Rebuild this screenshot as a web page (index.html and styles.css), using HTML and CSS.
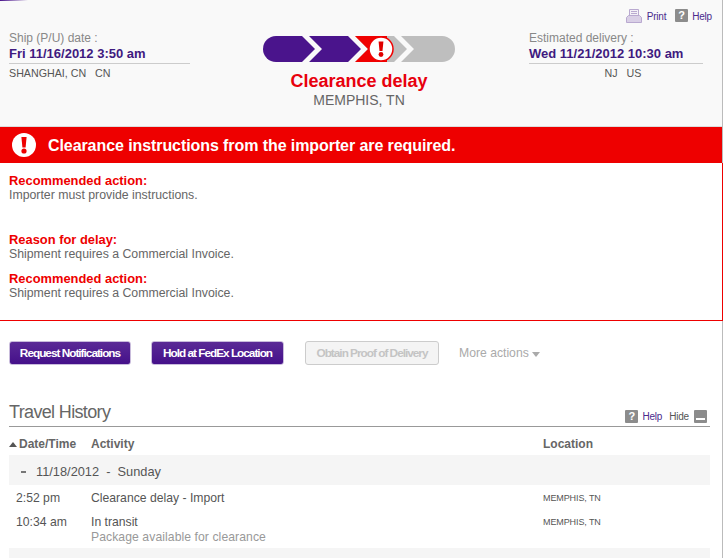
FILE: index.html
```html
<!DOCTYPE html>
<html>
<head>
<title>Track shipment</title>
<meta charset="UTF-8">
<link rel="stylesheet" href="styles.css">
</head>
<body>
<div class="page">

  <div class="summary">
    <div class="tools">
      <svg class="print_icon" width="16" height="14" viewBox="0 0 16 14">
        <path d="M3.5 .5h9v6h-9z" fill="#f3f0f7" stroke="#b9a9d0"/>
        <path d="M5 2.5h6M5 4.5h6" stroke="#b9a9d0"/>
        <path d="M.5 8.5l2-2h11l2 2v5h-15z" fill="#d9cfe6" stroke="#b9a9d0"/>
      </svg>
      <a class="tool_link">Print</a>
      <span class="help_icon">?</span>
      <a class="tool_link">Help</a>
    </div>
    <div class="summary_row">
      <div class="endpoint">
        <div class="end_label">Ship (P/U) date :</div>
        <div class="end_date">Fri 11/16/2012 3:50 am</div>
        <div class="end_place">SHANGHAI, CN &nbsp; CN</div>
      </div>
      <div class="status">
        <svg class="progress" width="192" height="26" viewBox="0 0 192 26">
          <path d="M13 0H39L52 13 39 26H13A13 13 0 0 1 13 0Z" fill="#4a148c"/>
          <path d="M46 0H85L98 13 85 26H46L59 13Z" fill="#4a148c"/>
          <path d="M92 0H131L144 13 131 26H92L105 13Z" fill="#bebebe"/>
          <path d="M92 0H124V26H92L105 13Z" fill="#f00000"/>
          <path d="M138 0H179A13 13 0 0 1 179 26H138L151 13Z" fill="#bebebe"/>
          <circle cx="118" cy="13" r="12" fill="#fff" stroke="#f00000" stroke-width="1.5"/>
          <path d="M115.6 5.5h4.8L119.5 15h-3Z" fill="#e00000"/>
          <circle cx="118" cy="18.5" r="2.4" fill="#e00000"/>
        </svg>
        <div class="status_title">Clearance delay</div>
        <div class="status_place">MEMPHIS, TN</div>
      </div>
      <div class="endpoint endpoint_to">
        <div class="end_label">Estimated delivery :</div>
        <div class="end_date">Wed 11/21/2012 10:30 am</div>
        <div class="end_place centered">NJ &nbsp; US</div>
      </div>
    </div>
  </div>

  <div class="alert_bar">
    <svg width="24" height="24" viewBox="0 0 24 24">
      <circle cx="12" cy="12" r="12" fill="#fff"/>
      <path d="M9.4 4h5.2l-1 10.5h-3.2Z" fill="#ee0000"/>
      <circle cx="12" cy="18" r="2.6" fill="#ee0000"/>
    </svg>
    <span>Clearance instructions from the importer are required.</span>
  </div>

  <div class="notes">
    <div class="note note_first">
      <div class="note_head">Recommended action:</div>
      <div class="note_text">Importer must provide instructions.</div>
    </div>
    <div class="note">
      <div class="note_head">Reason for delay:</div>
      <div class="note_text">Shipment requires a Commercial Invoice.</div>
    </div>
    <div class="note">
      <div class="note_head">Recommended action:</div>
      <div class="note_text">Shipment requires a Commercial Invoice.</div>
    </div>
  </div>

  <div class="actions">
    <button class="btn btn_notify">Request Notifications</button>
    <button class="btn btn_hold">Hold at FedEx Location</button>
    <button class="btn btn_off">Obtain Proof of Delivery</button>
    <span class="more">More actions<i class="caret"></i></span>
  </div>

  <div class="history">
    <div class="history_head">
      <h2>Travel History</h2>
      <div class="history_tools">
        <span class="help_icon">?</span>
        <a class="tool_link">Help</a>
        <span class="hide_link">Hide</span>
        <span class="hide_icon"></span>
      </div>
    </div>
    <div class="row row_head">
      <div class="col_time"><i class="sort"></i>Date/Time</div>
      <div class="col_activity">Activity</div>
      <div class="col_place">Location</div>
    </div>
    <div class="day"><b class="dash"></b>11/18/2012 &nbsp;-&nbsp; Sunday</div>
    <div class="row row_event">
      <div class="col_time">2:52 pm</div>
      <div class="col_activity">Clearance delay - Import</div>
      <div class="col_place">MEMPHIS, TN</div>
    </div>
    <div class="row row_event">
      <div class="col_time">10:34 am</div>
      <div class="col_activity">In transit<div class="sub">Package available for clearance</div></div>
      <div class="col_place">MEMPHIS, TN</div>
    </div>
    <div class="day day_next"></div>
  </div>

</div>
</body>
</html>
```

FILE: styles.css
```css
* {
  box-sizing: border-box;
}
html, body {
  height: 100%;
  overflow: hidden;
}
body {
  margin: 0;
  background: #fff;
  font-family: "Liberation Sans", Arial, sans-serif;
  font-size: 12px;
  color: #555;
}
.page {
  width: 723px;
  height: 558px;
  border-right: 1px solid #bbb;
}
.summary {
  height: 127px;
  background: #f9f9f9;
  border-bottom: 1px solid #ddd;
  position: relative;
}
.summary::before {
  content: "";
  position: absolute;
  left: 0;
  top: 0;
  width: 28px;
  height: 1px;
  background: linear-gradient(90deg, #4a148c, #f9f9f9);
}
.tools {
  height: 31px;
  padding: 9px 10px 0 0;
  display: flex;
  justify-content: flex-end;
  align-items: flex-start;
}
.tool_link {
  font-size: 10px;
  line-height: 15px;
  letter-spacing: -.2px;
  color: #4a2a8c;
}
.print_icon {
  margin-right: 5px;
}
.help_icon {
  width: 13px;
  height: 13px;
  margin: 0 4px 0 9px;
  background: #8c8c8c;
  border-radius: 1px;
  color: #fff;
  font-size: 11px;
  line-height: 13px;
  font-weight: bold;
  text-align: center;
}
.summary_row {
  display: flex;
  padding-left: 9px;
}
.endpoint {
  width: 181px;
}
.end_label {
  font-size: 12px;
  line-height: 15px;
  color: #888;
}
.end_date {
  font-size: 13px;
  line-height: 15px;
  font-weight: bold;
  color: #3f1a80;
  padding-bottom: 2px;
  border-bottom: 1px solid #ccc;
}
.end_place {
  font-size: 10.7px;
  line-height: 14px;
  margin-top: 2px;
  color: #555;
}
.centered {
  padding-left: 14px;
  text-align: center;
}
.endpoint_to {
  width: 174px;
  margin-left: 74px;
}
.status {
  width: 192px;
  margin: 5px 0 0 73px;
  text-align: center;
}
.progress {
  display: block;
}
.status_title {
  margin-top: 9px;
  font-size: 18px;
  line-height: 20px;
  font-weight: bold;
  color: #e8000d;
}
.status_place {
  margin-top: 1px;
  font-size: 14px;
  line-height: 17px;
  color: #666;
}
.alert_bar {
  height: 36px;
  background: #ee0000;
  display: flex;
  align-items: center;
  padding-left: 12px;
  color: #fff;
  font-size: 16px;
  font-weight: bold;
  letter-spacing: -.08px;
}
.alert_bar span {
  padding-top: 2px;
}
.alert_bar svg {
  margin-right: 12px;
}
.notes {
  height: 158px;
  padding: 11px 9px 0;
  background: #fff;
  border-right: 1px solid #ee0000;
  border-bottom: 1px solid #ee0000;
  margin-right: -1px;
}
.note {
  margin-bottom: 11px;
}
.note_first {
  margin-bottom: 31px;
}
.note_head {
  font-size: 12.9px;
  line-height: 14px;
  font-weight: bold;
  color: #ee0000;
}
.note_text {
  font-size: 12.3px;
  line-height: 14px;
  color: #666;
}
.actions {
  display: flex;
  align-items: center;
  padding: 20px 0 0 9px;
}
.btn {
  height: 24px;
  margin-right: 20px;
  padding: 0;
  border: 1px solid #c9bcdc;
  border-radius: 3px;
  background: linear-gradient(#5a2a96, #45108a);
  color: #fff;
  font-family: "Liberation Sans", Arial, sans-serif;
  font-size: 11.8px;
  font-weight: bold;
  letter-spacing: -1px;
}
.btn_notify {
  width: 122px;
}
.btn_hold {
  width: 133px;
  margin-right: 21px;
}
.btn_off {
  width: 134px;
  background: #f4f4f4;
  border-color: #ccc;
  color: #c4c4c4;
}
.more {
  color: #aaa;
  font-size: 12.2px;
}
.caret {
  display: inline-block;
  margin-left: 3px;
  border: 4.5px solid transparent;
  border-top: 5px solid #aaa;
  border-bottom: 0;
  vertical-align: 0;
}
.history {
  width: 701px;
  margin: 35px 0 0 9px;
}
.history_head {
  height: 27px;
  display: flex;
  justify-content: space-between;
  align-items: flex-start;
  border-bottom: 1px solid #999;
}
h2 {
  margin: 0;
  font-size: 18px;
  line-height: 24px;
  font-weight: normal;
  letter-spacing: -.65px;
  color: #666;
}
.history_tools {
  display: flex;
  align-items: center;
  margin: 9px 3px 0 0;
}
.hide_link {
  font-size: 10px;
  letter-spacing: -.2px;
  color: #555;
  margin: 0 5px 0 7px;
}
.hide_icon {
  width: 13px;
  height: 13px;
  background: #8c8c8c;
  border-radius: 1px;
  position: relative;
}
.hide_icon::after {
  content: "";
  position: absolute;
  left: 2px;
  right: 2px;
  bottom: 3px;
  height: 2px;
  background: #fff;
}
.row {
  display: flex;
}
.col_time {
  width: 82px;
}
.col_activity {
  width: 452px;
}
.col_place {
  flex: 1;
}
.row_head {
  height: 28px;
  line-height: 35px;
  font-weight: bold;
  color: #666;
}
.sort {
  display: inline-block;
  margin-right: 2px;
  border: 4px solid transparent;
  border-bottom: 5px solid #555;
  border-top: 0;
  vertical-align: 1px;
}
.day {
  height: 30px;
  background: #f5f5f5;
  line-height: 33px;
  font-size: 12.8px;
  padding-left: 12px;
  color: #555;
}
.dash {
  display: inline-block;
  width: 5px;
  height: 2px;
  margin-right: 10px;
  background: #777;
  vertical-align: 3px;
}
.row_event {
  padding-top: 6px;
  line-height: 15px;
  font-size: 12.2px;
}
.row_event + .row_event {
  padding-top: 9px;
  height: 42px;
}
.row_event .col_time {
  padding-left: 7px;
}
.row_event .col_place {
  font-size: 9px;
  letter-spacing: -.1px;
}
.sub {
  color: #999;
  letter-spacing: .07px;
}
```
